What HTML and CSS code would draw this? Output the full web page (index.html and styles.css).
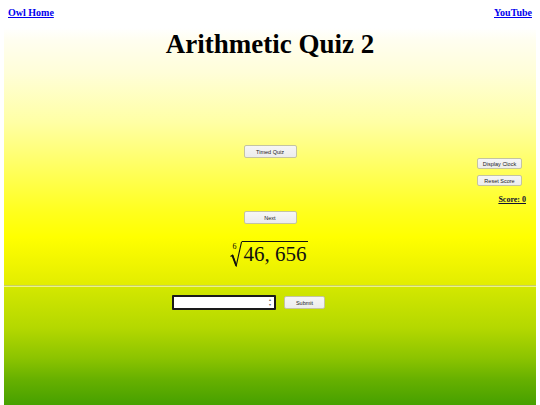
FILE: index.html
```html
<!DOCTYPE html>
<html>
<head>
<meta charset="utf-8">
<title>Arithmetic Quiz 2</title>
<link rel="stylesheet" href="styles.css">
</head>
<body>
<header class="top">
  <a class="toplink" href="#">Owl Home</a>
  <a class="toplink" href="#">YouTube</a>
</header>
<main class="quiz">
  <section class="upper">
    <h1 class="title">Arithmetic Quiz 2</h1>
    <div class="center-row timed-row">
      <button class="btn btn-main">Timed Quiz</button>
    </div>
    <div class="side">
      <button class="btn btn-side">Display Clock</button>
      <button class="btn btn-side">Reset Score</button>
      <a class="score" href="#">Score: 0</a>
    </div>
    <div class="center-row next-row">
      <button class="btn btn-main">Next</button>
    </div>
    <div class="problem">
      <span class="root">
        <sup class="index">6</sup>
        <svg class="radical" width="12" height="26" viewBox="0 0 12 26">
          <path d="M0.5 15.5 L2.6 14.2 L6.2 24.8 L11.6 0.6" fill="none" stroke="#111" stroke-width="1.1" stroke-linejoin="miter"/>
          <path d="M2.4 14.4 L6.2 24.8" fill="none" stroke="#111" stroke-width="1.8"/>
        </svg>
        <span class="radicand">46, 656</span>
      </span>
    </div>
  </section>
  <hr class="divider">
  <section class="lower">
    <div class="answer-row">
      <div class="numbox">
        <input class="numinput" type="text" value="">
        <span class="spin"><span class="arrow">&#9652;</span><span class="arrow">&#9662;</span></span>
      </div>
      <button class="btn btn-submit">Submit</button>
    </div>
  </section>
</main>
</body>
</html>
```
FILE: styles.css
```css
html, body {
  margin: 0;
  padding: 0;
  background: #ffffff;
}
body {
  width: 540px;
  height: 405px;
  overflow: hidden;
  font-family: "Liberation Serif", "Times New Roman", serif;
}
.top {
  display: flex;
  justify-content: space-between;
  height: 21px;
  padding: 7px 8px 0 8px;
}
.toplink {
  font-size: 10px;
  font-weight: bold;
  color: #0000ee;
  text-decoration: underline;
  line-height: 11px;
}
.quiz {
  margin: 0 4px;
  height: 377px;
  display: flex;
  flex-direction: column;
  background: linear-gradient(to bottom,
    #ffffff 0px,
    #fffef0 12px,
    #fffed8 45px,
    #ffffa4 95px,
    #ffff58 145px,
    #ffff1c 185px,
    #ffff00 209px,
    #f2f600 232px,
    #e2ed00 257px,
    #d4e800 258px,
    #b4d800 300px,
    #8cc400 330px,
    #66b000 352px,
    #46a000 377px);
}
.upper {
  height: 257px;
  display: flex;
  flex-direction: column;
}
.title {
  margin: 0;
  padding-top: 1px;
  font-size: 27px;
  line-height: 31px;
  font-weight: bold;
  text-align: center;
  color: #000;
}
.center-row {
  display: flex;
  justify-content: center;
}
.timed-row {
  margin-top: 85px;
}
.next-row {
  margin-top: 7px;
}
.btn {
  font-family: "Liberation Sans", Arial, sans-serif;
  font-size: 5.5px;
  color: #222;
  background: linear-gradient(#f6f6f6, #ececec);
  border: 1px solid #c4c4a2;
  border-radius: 2px;
  padding: 0;
}
.btn-main {
  width: 53px;
  height: 13px;
}
.side {
  display: flex;
  flex-direction: column;
  align-items: flex-end;
  padding-right: 10px;
}
.btn-side {
  width: 45px;
  height: 11px;
  margin-right: 4px;
  margin-bottom: 6px;
}
.score {
  font-size: 8px;
  font-weight: bold;
  color: #111133;
  text-decoration: underline;
  line-height: 9px;
  margin-top: 3px;
}
.problem {
  margin-top: 17px;
  display: flex;
  justify-content: center;
}
.root {
  display: flex;
  align-items: flex-start;
}
.index {
  font-size: 8px;
  line-height: 8px;
  margin-top: 2px;
  margin-right: -7px;
  font-family: "Liberation Serif", serif;
}
.radical {
  display: block;
}
.radicand {
  border-top: 1.2px solid #111;
  font-size: 21px;
  line-height: 24px;
  padding: 0 1px 0 2px;
  color: #111;
  font-family: "Liberation Serif", serif;
}
.divider {
  margin: 0;
  height: 0;
  border: 0;
  border-top: 1px solid #c9d060;
  border-bottom: 1px solid #ecf388;
}
.lower {
  flex: 1;
}
.answer-row {
  display: flex;
  align-items: center;
  gap: 8px;
  margin-top: 8px;
  padding-left: 168px;
}
.numbox {
  display: flex;
  align-items: center;
  width: 100px;
  height: 11px;
  background: #fff;
  border: 2px solid #1a1a1a;
  border-radius: 1px;
}
.numinput {
  flex: 1;
  min-width: 0;
  border: 0;
  outline: 0;
  padding: 0;
  height: 11px;
  background: transparent;
}
.spin {
  display: flex;
  flex-direction: column;
  width: 6px;
  margin-right: 1px;
  font-family: "DejaVu Sans", sans-serif;
  font-size: 4px;
  line-height: 4.5px;
  color: #666;
  text-align: center;
}
.arrow {
  display: block;
}
.btn-submit {
  width: 41px;
  height: 13px;
}
```
